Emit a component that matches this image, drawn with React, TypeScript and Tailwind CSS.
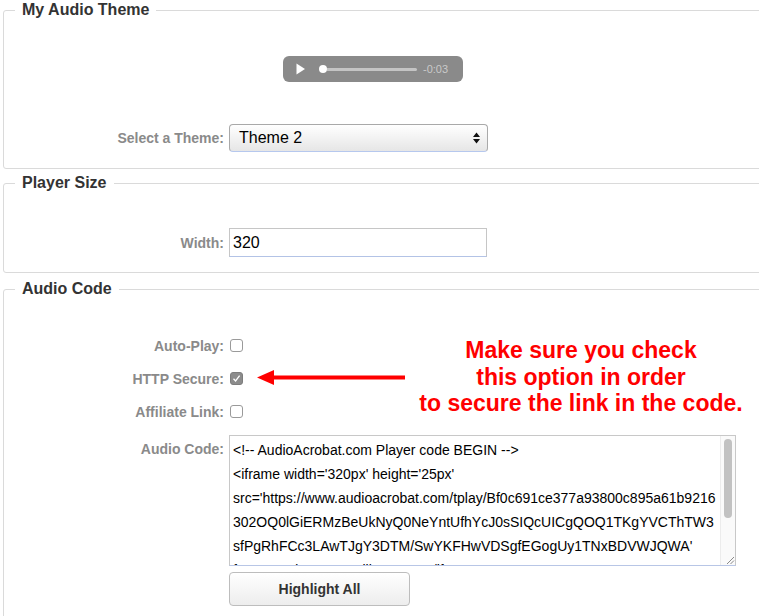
import type { ReactNode } from "react";

const codeLines = [
  "<!-- AudioAcrobat.com Player code BEGIN -->",
  "<iframe width='320px' height='25px'",
  "src='https://www.audioacrobat.com/tplay/Bf0c691ce377a93800c895a61b9216",
  "302OQ0lGiERMzBeUkNyQ0NeYntUfhYcJ0sSIQcUICgQOQ1TKgYVCThTW3",
  "sfPgRhFCc3LAwTJgY3DTM/SwYKFHwVDSgfEGogUy1TNxBDVWJQWA'",
  "frameBorder='0' scrolling='no'></iframe>",
];

function Section({ title, className, children }: { title: string; className?: string; children: ReactNode }) {
  return (
    <fieldset className={`ml-[3px] w-[800px] rounded-[3px] border border-[#dadada] ${className ?? ""}`}>
      <legend className="ml-[11px] px-[7px] text-base leading-5 font-bold text-[#333]">{title}</legend>
      {children}
    </fieldset>
  );
}

function Label({ children, className }: { children: ReactNode; className?: string }) {
  return (
    <span className={`w-[220px] shrink-0 text-right text-sm font-bold text-[#8a8a8a] ${className ?? ""}`}>{children}</span>
  );
}

function Checkbox({ checked }: { checked?: boolean }) {
  if (checked) {
    return (
      <span className="ml-[1px] flex h-[13px] w-[13px] items-center justify-center rounded-[3px] border border-[#7d7d7d] bg-[#8c8c8c]">
        <svg width="9" height="9" viewBox="0 0 9 9">
          <path d="M1.5 4.8 L3.6 7 L7.6 1.6" fill="none" stroke="#fff" strokeWidth="1.3" />
        </svg>
      </span>
    );
  }
  return <span className="ml-[1px] h-[13px] w-[13px] rounded-[3px] border border-[#9a9a9a] bg-white" />;
}

export default function App() {
  return (
    <div className="h-[616px] w-[759px] overflow-hidden bg-white font-['Liberation_Sans',Arial,sans-serif]">
      <Section title="My Audio Theme" className="pb-[16px]">
        <div className="ml-[279px] mt-[36px] flex h-[26px] w-[180px] items-center rounded-[6px] bg-[#8a8a8a] pl-[13px]">
          <svg width="10" height="12" viewBox="0 0 10 12">
            <path d="M0.5 0.5 L9 6 L0.5 11.5 Z" fill="#fff" />
          </svg>
          <div className="ml-[13px] flex items-center">
            <span className="h-[8px] w-[8px] rounded-full bg-white" />
            <span className="h-[3px] w-[90px] rounded-r-full bg-[#c4c4c4]" />
          </div>
          <span className="ml-[6px] text-[11px] text-[#c9c9c9]">-0:03</span>
        </div>
        <div className="mt-[42px] flex items-center gap-[5px]">
          <Label>Select a Theme:</Label>
          <div className="flex h-[28px] w-[259px] items-center justify-between rounded-[4px] border border-[#a9a9a9] border-b-[#b6c8ee] bg-gradient-to-b from-white to-[#e6e6e6] pl-[9px] pr-[7px]">
            <span className="text-base text-black">Theme 2</span>
            <svg width="7" height="12" viewBox="0 0 7 12">
              <path d="M3.5 0.5 L7 5 L0 5 Z M0 7 L7 7 L3.5 11.5 Z" fill="#111" />
            </svg>
          </div>
        </div>
      </Section>

      <Section title="Player Size" className="mt-[4px] pb-[15px]">
        <div className="mt-[35px] flex items-center gap-[5px]">
          <Label>Width:</Label>
          <div className="flex h-[29px] w-[258px] items-center border border-[#c6c6c6] border-b-[#b3c3e6] bg-white pl-[3px] text-base text-black">
            320
          </div>
        </div>
      </Section>

      <Section title="Audio Code" className="mt-[6px] pb-[20px]">
        <div className="relative mt-[30px]">
          <div className="flex h-[33px] items-center gap-[5px]">
            <Label>Auto-Play:</Label>
            <Checkbox />
          </div>
          <div className="flex h-[33px] items-center gap-[5px]">
            <Label>HTTP Secure:</Label>
            <Checkbox checked />
          </div>
          <div className="flex h-[33px] items-center gap-[5px]">
            <Label>Affiliate Link:</Label>
            <Checkbox />
          </div>

          <svg className="absolute left-[250px] top-[40px]" width="154" height="18" viewBox="0 0 154 18">
            <path d="M3 8.5 L20 1 L20 6.5 L151 6.5 L151 10.5 L20 10.5 L20 16 Z" fill="#f00" />
          </svg>
          <div className="absolute left-[397px] top-[8px] w-[360px] text-center text-[23px] leading-[26.5px] font-bold text-[#f00]">
            <div>Make sure you check</div>
            <div>this option in order</div>
            <div>to secure the link in the code.</div>
          </div>

          <div className="mt-[7px] flex gap-[5px]">
            <Label className="pt-[4px]">Audio Code:</Label>
            <div>
              <div className="relative h-[131px] w-[507px] overflow-hidden border border-[#c8c8c8] border-b-[#b8c6e6] bg-white">
                <div className="pl-[3px] pt-[2px] text-sm leading-6 whitespace-nowrap text-black">
                  {codeLines.map((l) => (
                    <div key={l}>{l}</div>
                  ))}
                </div>
                <div className="absolute right-0 top-0 h-full w-[15px] border-l border-[#ececec] bg-[#fafafa]">
                  <div className="ml-[3px] mt-[3px] h-[79px] w-[8px] rounded-full bg-[#c2c2c2]" />
                </div>
                <svg className="absolute bottom-0 right-0" width="10" height="10" viewBox="0 0 10 10">
                  <path d="M9 2 L2 9 M9 5.5 L5.5 9" stroke="#8a8a8a" strokeWidth="1" />
                </svg>
              </div>
              <button
                type="button"
                className="mt-[6px] h-[34px] w-[181px] rounded-[4px] border border-[#bdbdbd] bg-gradient-to-b from-white to-[#ededed] text-sm font-bold text-[#333]"
              >
                Highlight All
              </button>
            </div>
          </div>
        </div>
      </Section>
    </div>
  );
}
